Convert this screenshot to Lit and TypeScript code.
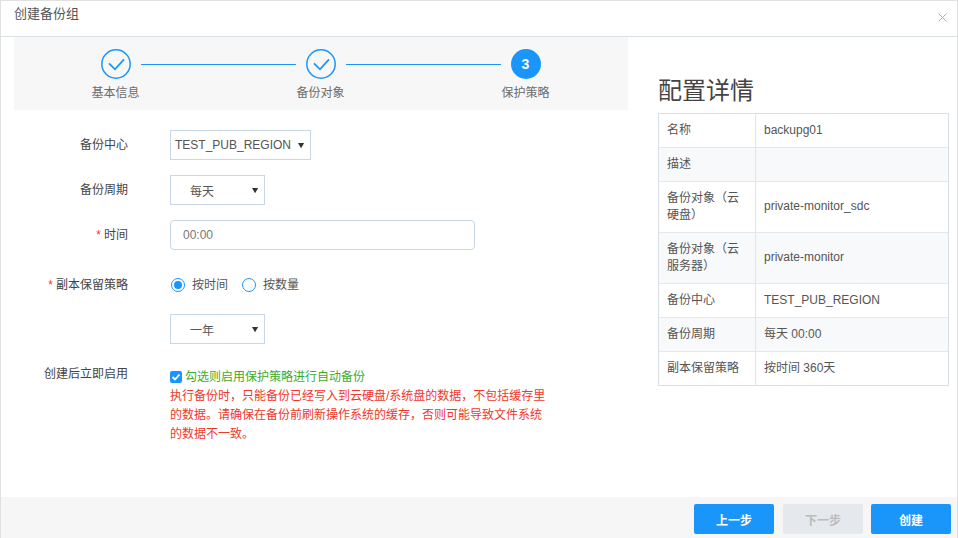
import { LitElement, html, css } from "lit";
import { customElement } from "lit/decorators.js";

const check = html`<svg viewBox="0 0 30 30" width="30" height="30"><circle cx="15" cy="15" r="14.2" fill="none" stroke="#1a96fb" stroke-width="1.5"/><path d="M8 14.3l6 6 9-10" fill="none" stroke="#1a96fb" stroke-width="1.8"/></svg>`;
const arrow = html`<svg class="arrow" viewBox="0 0 8 8" width="7" height="7"><path d="M0 1h7L3.5 7z" fill="#333"/></svg>`;

@customElement("app-root")
export class AppRoot extends LitElement {
  static styles = css`
    :host { display: block; width: 958px; height: 538px; font-family: "Liberation Sans", "Noto Sans CJK SC", sans-serif; font-size: 12px; color: #555; }
    * { box-sizing: border-box; }
    .dialog { width: 958px; height: 538px; border: 1px solid #e0e0e0; border-bottom: 0; display: flex; flex-direction: column; background: #fff; }
    .head { height: 36px; flex: none; border-bottom: 1px solid #d8dfe6; display: flex; align-items: flex-start; justify-content: space-between; padding: 4px 10px 0 13px; font-size: 13px; line-height: 18px; color: #555; }
    .close { margin-top: 8px; display: block; }
    .body { flex: 1; display: flex; min-height: 0; }
    .left { width: 627px; flex: none; padding-left: 13px; }
    .steps { height: 73px; background: #f7f7f7; display: flex; }
    .step { width: 205px; flex: none; padding-top: 12px; display: flex; flex-direction: column; align-items: center; position: relative; }
    .step:first-child { margin-left: -1px; }
    .step svg { display: block; }
    .num { width: 30px; height: 30px; border-radius: 50%; background: #1a96fb; color: #fff; font-size: 14px; font-weight: 700; display: flex; align-items: center; justify-content: center; }
    .step-label { margin-top: 6px; line-height: 16px; color: #6b6b6b; }
    .line { position: absolute; left: 128px; top: 27px; width: 155px; height: 1px; background: #1a96fb; }
    .form { padding-top: 20px; }
    .row { display: flex; align-items: center; }
    .label { width: 114px; flex: none; text-align: right; color: #444; line-height: 16px; }
    .star { color: #f33; margin-right: 3px; }
    .ctrl { margin-left: 42px; }
    .select { height: 30px; border: 1px solid #c8d7e6; display: flex; align-items: center; color: #555; position: relative; background: #fff; }
    .center-sel { width: 141px; padding-left: 4px; }
    .center-sel .arrow { position: absolute; left: 127px; top: 11px; }
    .short { width: 95px; padding-left: 19px; }
    .short .arrow { position: absolute; left: 81px; top: 11px; }
    .input { width: 305px; height: 30px; border: 1px solid #c8d7e6; border-radius: 4px; padding-left: 12px; display: flex; align-items: center; color: #777; }
    .radios { display: flex; align-items: center; }
    .radio { width: 14px; height: 14px; border: 1px solid #1a96fb; border-radius: 50%; margin-left: 1px; display: flex; align-items: center; justify-content: center; flex: none; }
    .radio i { width: 8px; height: 8px; border-radius: 50%; background: #1a96fb; display: block; }
    .radio-text { margin-left: 7px; color: #555; line-height: 16px; }
    .radio-gap { margin-left: 14px; }
    .r1 { margin-top: 15px; }
    .r2 { margin-top: 15px; }
    .r3 { margin-top: 27px; }
    .r4 { margin-top: 21px; }
    .r5 { margin-top: 22px; align-items: flex-start; }
    .note { width: 380px; }
    .check-line { display: flex; align-items: center; color: #3daa2b; line-height: 18px; margin-top: 2px; }
    .check { width: 12px; height: 12px; border-radius: 2px; background: #1a96fb; flex: none; margin-right: 3px; display: block; }
    .warn { color: #f0372b; line-height: 19px; margin-top: 1px; }
    .right { flex: 1; padding: 41px 8px 0 30px; }
    h2 { margin: 0; font-weight: 400; font-size: 24px; line-height: 26px; color: #444; height: 35px; }
    .table { border: 1px solid #d8dfe6; }
    .tr { display: flex; border-top: 1px solid #e3e8ee; align-items: stretch; }
    .tr:first-child { border-top: 0; }
    .tr:nth-child(even) { background: #f8f9fb; }
    .k { width: 97px; flex: none; border-right: 1px solid #dfe4ea; padding: 8px 8px; line-height: 17px; color: #555; min-height: 33px; }
    .v { flex: 1; padding: 0 8px 2px; display: flex; align-items: center; color: #555; line-height: 14px; }
    .foot { height: 41px; flex: none; background: #f6f6f6; display: flex; justify-content: flex-end; align-items: flex-start; gap: 8px; padding: 7px 6px 0 0; }
    .btn { width: 80px; height: 30px; border-radius: 2px; background: #1a96fb; color: #fff; font-weight: 700; display: flex; align-items: center; justify-content: center; }
    .btn:first-child { margin-right: 1px; }
    .btn.off { background: #e5e8ec; color: #bbb; }
  `;

  render() {
    const rows: [string, string][] = [
      ["名称", "backupg01"], ["描述", ""],
      ["备份对象\uFF08云硬盘\uFF09", "private-monitor_sdc"], ["备份对象\uFF08云服务器\uFF09", "private-monitor"],
      ["备份中心", "TEST_PUB_REGION"], ["备份周期", "每天 00:00"], ["副本保留策略", "按时间 360天"],
    ];
    return html`<div class="dialog">
      <div class="head"><span>创建备份组</span>
        <svg class="close" viewBox="0 0 9 9" width="9" height="9"><path d="M.5.5l8 8M8.5.5l-8 8" stroke="#aab2bb" stroke-width="1" fill="none"/></svg>
      </div>
      <div class="body">
        <div class="left">
          <div class="steps">
            <div class="step">${check}<div class="step-label">基本信息</div><div class="line"></div></div>
            <div class="step">${check}<div class="step-label">备份对象</div><div class="line"></div></div>
            <div class="step"><div class="num">3</div><div class="step-label">保护策略</div></div>
          </div>
          <div class="form">
            <div class="row"><div class="label">备份中心</div><div class="ctrl"><div class="select center-sel">TEST_PUB_REGION${arrow}</div></div></div>
            <div class="row r1"><div class="label">备份周期</div><div class="ctrl"><div class="select short">每天${arrow}</div></div></div>
            <div class="row r2"><div class="label"><span class="star">*</span>时间</div><div class="ctrl"><div class="input">00:00</div></div></div>
            <div class="row r3"><div class="label"><span class="star">*</span>副本保留策略</div><div class="ctrl radios">
              <span class="radio"><i></i></span><span class="radio-text">按时间</span>
              <span class="radio radio-gap"></span><span class="radio-text">按数量</span>
            </div></div>
            <div class="row r4"><div class="label"></div><div class="ctrl"><div class="select short">一年${arrow}</div></div></div>
            <div class="row r5"><div class="label">创建后立即启用</div><div class="ctrl note">
              <div class="check-line"><svg class="check" viewBox="0 0 12 12"><path d="M2.5 6l2.5 2.5 4.5-5" fill="none" stroke="#fff" stroke-width="1.8"/></svg>勾选则启用保护策略进行自动备份</div>
              <div class="warn">执行备份时\uFF0C只能备份已经写入到云硬盘/系统盘的数据\uFF0C不包括缓存里的数据。请确保在备份前刷新操作系统的缓存\uFF0C否则可能导致文件系统的数据不一致。</div>
            </div></div>
          </div>
        </div>
        <div class="right">
          <h2>配置详情</h2>
          <div class="table">${rows.map(([k, v]) => html`<div class="tr"><div class="k">${k}</div><div class="v">${v}</div></div>`)}</div>
        </div>
      </div>
      <div class="foot"><div class="btn">上一步</div><div class="btn off">下一步</div><div class="btn">创建</div></div>
    </div>`;
  }
}
